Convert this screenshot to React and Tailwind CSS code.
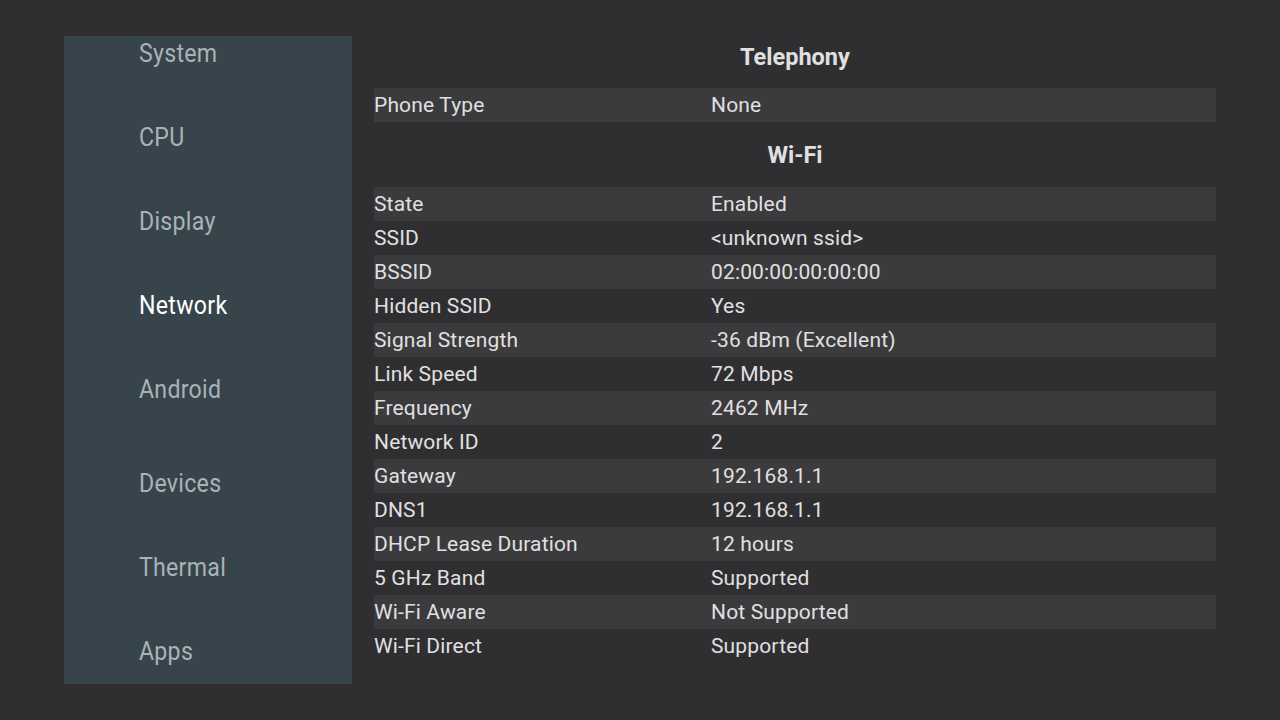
import React from "react";

const nav = [
  { label: "System" },
  { label: "CPU" },
  { label: "Display" },
  { label: "Network", active: true },
  { label: "Android" },
  { label: "Devices", extra: true },
  { label: "Thermal" },
  { label: "Apps" },
];

const wifi = [
  ["State", "Enabled"],
  ["SSID", "<unknown ssid>"],
  ["BSSID", "02:00:00:00:00:00"],
  ["Hidden SSID", "Yes"],
  ["Signal Strength", "-36 dBm (Excellent)"],
  ["Link Speed", "72 Mbps"],
  ["Frequency", "2462 MHz"],
  ["Network ID", "2"],
  ["Gateway", "192.168.1.1"],
  ["DNS1", "192.168.1.1"],
  ["DHCP Lease Duration", "12 hours"],
  ["5 GHz Band", "Supported"],
  ["Wi-Fi Aware", "Not Supported"],
  ["Wi-Fi Direct", "Supported"],
];

function Row({ k, v, light }) {
  return (
    <div
      className={`grid grid-cols-[337px_1fr] h-[34px] pt-[2px] items-center text-[21px] tracking-[0.15px] text-[#e0e0e0] ${
        light ? "bg-[#3b3a3c]" : ""
      }`}
    >
      <span>{k}</span>
      <span>{v}</span>
    </div>
  );
}

export default function App() {
  return (
    <div
      className="w-[1280px] h-[720px] bg-[#2f2e30] flex overflow-hidden"
      style={{ fontFamily: "Roboto, 'Noto Sans', sans-serif" }}
    >
      <div className="ml-[64px] mt-[36px] w-[288px] h-[648px] bg-[#38444b] overflow-hidden shrink-0">
        <div className="mt-[-25px] flex flex-col pl-[75px]">
          {nav.map((n) => (
            <div
              key={n.label}
              className={`h-[84px] flex items-center text-[26px] tracking-[0.3px] ${
                n.extra ? "mt-[10px]" : ""
              } ${n.active ? "text-white" : "text-[#a8b3b8]"}`}
            >
              <span className="inline-block origin-left scale-x-[0.89]">{n.label}</span>
            </div>
          ))}
        </div>
      </div>
      <div className="flex-1 pl-[22px] pr-[64px] pt-[26px]">
        <div className="h-[62px] pt-[2px] flex items-center justify-center text-[23.5px] font-bold text-[#e0e0e0]">
          Telephony
        </div>
        <Row k="Phone Type" v="None" light />
        <div className="h-[65px] pt-[2px] flex items-center justify-center text-[23.5px] font-bold text-[#e0e0e0]">
          Wi-Fi
        </div>
        {wifi.map(([k, v], i) => (
          <Row key={k} k={k} v={v} light={i % 2 === 0} />
        ))}
      </div>
    </div>
  );
}
